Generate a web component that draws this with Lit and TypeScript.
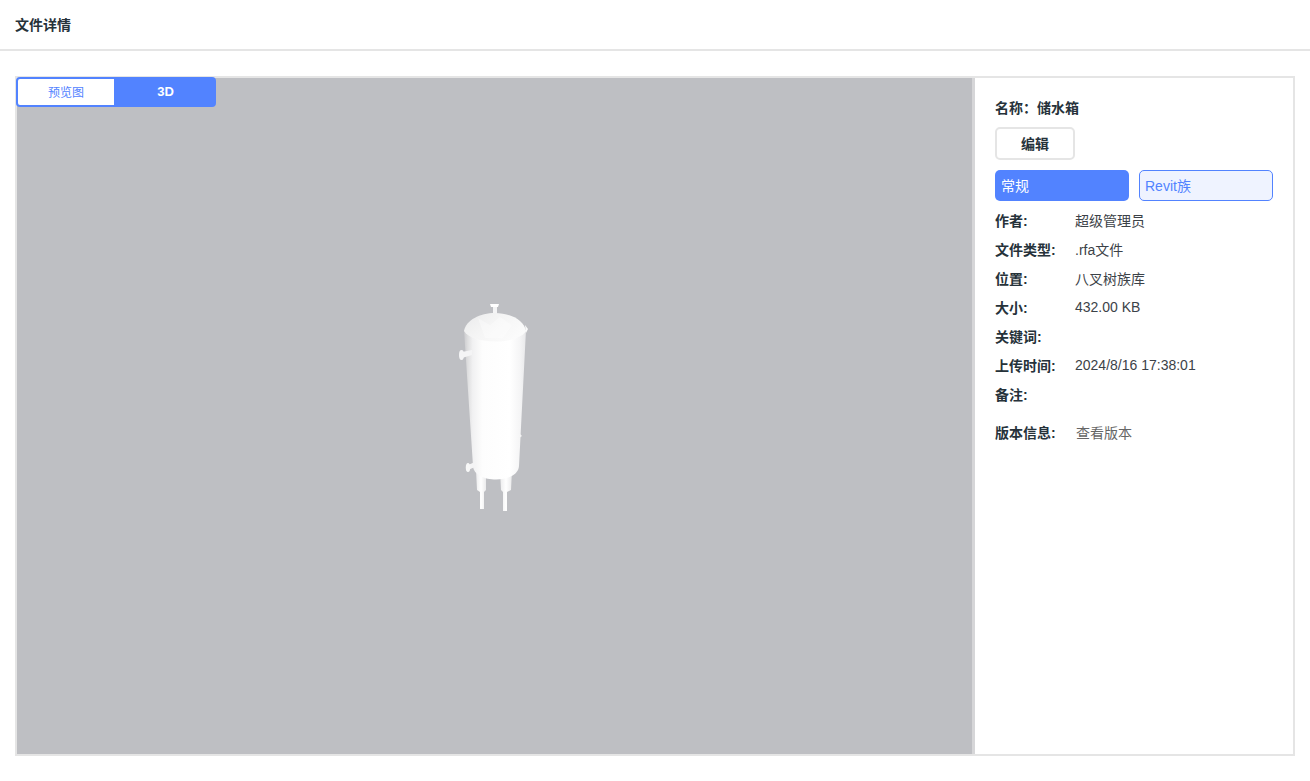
import { LitElement, html, css } from "lit";
import { customElement } from "lit/decorators.js";

const rows: [string, string, boolean][] = [
  ["作者:", "超级管理员", false],
  ["文件类型:", ".rfa文件", false],
  ["位置:", "八叉树族库", false],
  ["大小:", "432.00 KB", true],
  ["关键词:", "", false],
  ["上传时间:", "2024/8/16 17:38:01", true],
  ["备注:", "", false],
];

@customElement("app-root")
export class AppRoot extends LitElement {
  static styles = css`
    :host { display: block; width: 1310px; height: 781px; background: #fff; overflow: hidden;
      font-family: "Liberation Sans", "Noto Sans CJK SC", sans-serif; font-size: 14px; color: #303133; }
    * { box-sizing: border-box; }
    .head { height: 51px; border-bottom: 2px solid #e5e5e5; padding: 0 15px 2px; display: flex; align-items: center;
      font-weight: 700; color: #26323a; }
    .panel { margin: 25px 15px 0; width: 1280px; height: 680px; border: 2px solid #e5e5e5; display: flex; }
    .viewer { width: 958px; position: relative; background: #bebfc3; border-right: 3px solid #d6d6d8; flex: none; }
    .viewer svg { display: block; width: 955px; height: 676px; }
    .tabs { position: absolute; left: -1px; top: -1px; width: 200px; height: 30px; border-radius: 4px; background: #5283ff;
      border: 2px solid #5283ff; display: flex; font-size: 12px; }
    .tab { display: flex; align-items: center; justify-content: center; padding-bottom: 1px; }
    .tab.off { width: 96px; background: #fff; color: #5283ff; border-radius: 2px 0 0 2px; }
    .tab.on { flex: 1; color: #fff; font-weight: 700; font-size: 13px; padding-left: 3px; }
    .info { flex: 1; padding: 21px 20px 0; }
    .name { font-weight: 700; height: 18px; line-height: 18px; color: #26323a; }
    .edit { margin-top: 10px; width: 80px; height: 33px; border: 2px solid #e5e5e5; border-radius: 5px; background: #fff;
      padding-bottom: 2px; display: flex; align-items: center; justify-content: center; font-weight: 700; color: #26323a; }
    .tags { margin-top: 10px; display: flex; gap: 10px; }
    .tag { width: 134px; height: 31px; border-radius: 5px; padding: 0 0 2px 6px; display: flex; align-items: center; }
    .tag.a { background: #5283ff; color: #fff; }
    .tag.b { background: #eff3ff; color: #5283ff; border: 1px solid #5283ff; padding-left: 5px; }
    .rows { margin-top: 6px; }
    .row { display: flex; height: 29px; align-items: flex-start; }
    .k { width: 80px; font-weight: 700; line-height: 28px; color: #26323a; flex: none; }
    .v { line-height: 28px; color: #3c4248; }
    .v.latin { line-height: 26px; }
    .ver { margin-top: 9px; }
    .ver .v { color: #666; padding-left: 1px; }
  `;

  render() {
    return html`
      <div class="head">文件详情</div>
      <div class="panel">
        <div class="viewer">
          <svg viewBox="17 78 955 676" aria-hidden="true">
            <defs>
              <linearGradient id="body" x1="0" x2="1" y1="0" y2="0">
                <stop offset="0" stop-color="#cbcbce" />
                <stop offset="0.06" stop-color="#dededf" />
                <stop offset="0.14" stop-color="#f1f1f2" />
                <stop offset="0.3" stop-color="#fdfdfd" />
                <stop offset="0.74" stop-color="#ffffff" />
                <stop offset="0.9" stop-color="#f5f5f6" />
                <stop offset="1" stop-color="#e8e8ea" />
              </linearGradient>
              <linearGradient id="dome" x1="0" x2="1" y1="0" y2="0.6">
                <stop offset="0" stop-color="#eaeaeb" />
                <stop offset="0.5" stop-color="#f5f5f5" />
                <stop offset="1" stop-color="#fbfbfb" />
              </linearGradient>
              <linearGradient id="leg" x1="0" x2="1" y1="0" y2="0">
                <stop offset="0" stop-color="#ececed" />
                <stop offset="0.5" stop-color="#ffffff" />
                <stop offset="1" stop-color="#ebebec" />
              </linearGradient>
            </defs>
            <!-- legs -->
            <path d="M476 470 L486 470 L486 490 L484 492 L484 509 L480 509 L480 492 L477 490 Z" fill="url(#leg)" />
            <path d="M500 470 L512 470 L511 490 L507 492 L507 511 L503 511 L503 492 L501 490 Z" fill="url(#leg)" />
            <!-- top nozzle -->
            <path d="M493 306 L497 306 L497 316 L493 316 Z" fill="#f4f4f5" />
            <path d="M490 304 L499 304 L498 307 L491 307 Z" fill="#ffffff" />
            <!-- body -->
            <path d="M464 330 L526 330 L519 466 C518 484 474 484 473 466 Z" fill="url(#body)" />
            <!-- dome -->
            <path d="M464 331 C466 320 480 313 495 313 C510 313 524 320 526 331 C518 345 472 345 464 331 Z" fill="url(#dome)" />
            <path d="M478 318 L490 325 L500 317 L512 325 L503 338 L485 338 Z" fill="#ffffff" opacity=".35" />
            <!-- right nubs -->
            <path d="M525 325 L528 329 L526 333 Z" fill="#fbfbfb" />
            <path d="M520 434 L522 436 L519 438 Z" fill="#f5f5f5" />
            <!-- side nozzles -->
            <path d="M462 352 L472 350 L472 355 L462 358 Z" fill="#f4f4f5" />
            <ellipse cx="461.500" cy="355" rx="2.500" ry="5" fill="#f4f4f5" />
            <path d="M468 465 L475 462 L475 467 L468 470 Z" fill="#f4f4f5" />
            <ellipse cx="468" cy="467.500" rx="2.200" ry="4.500" fill="#f8f8f8" />
          </svg>
          <div class="tabs">
            <div class="tab off">预览图</div>
            <div class="tab on">3D</div>
          </div>
        </div>
        <div class="info">
          <div class="name">名称：储水箱</div>
          <div class="edit">编辑</div>
          <div class="tags">
            <div class="tag a">常规</div>
            <div class="tag b">Revit族</div>
          </div>
          <div class="rows">
            ${rows.map(([k, v, latin]) => html`<div class="row"><div class="k">${k}</div><div class="v ${latin ? "latin" : ""}">${v}</div></div>`)}
            <div class="row ver"><div class="k">版本信息:</div><div class="v">查看版本</div></div>
          </div>
        </div>
      </div>
    `;
  }
}
